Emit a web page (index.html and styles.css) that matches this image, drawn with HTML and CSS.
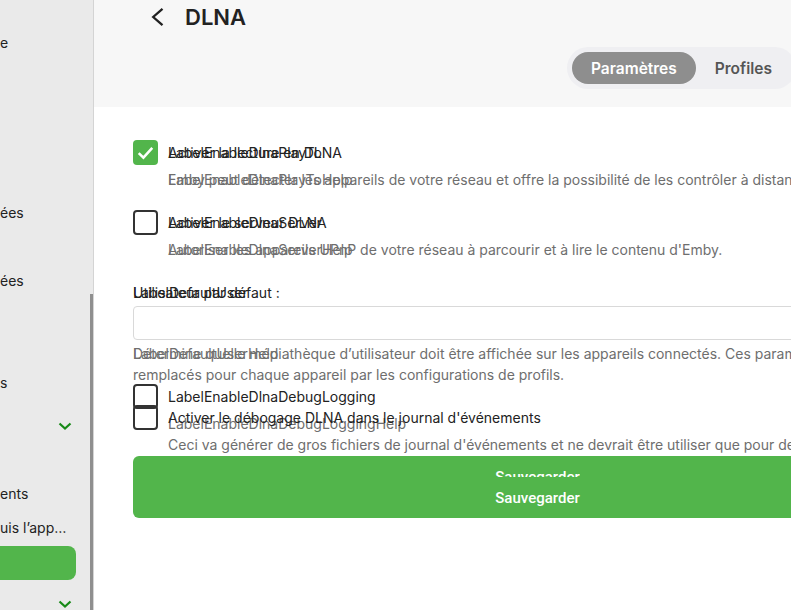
FILE: index.html
```html
<!DOCTYPE html>
<html lang="fr">
<head>
    <meta charset="UTF-8">
    <meta name="viewport" content="width=device-width, initial-scale=1.0">
    <title>DLNA</title>
    <link rel="stylesheet" href="styles.css">
</head>
<body>
<div class="app">
    <aside class="sidebar">
        <nav class="nav">
            <div class="nav-item">e</div>
            <div class="nav-item"></div>
            <div class="nav-item"></div>
            <div class="nav-item"></div>
            <div class="nav-item"></div>
            <div class="nav-item">ées</div>
            <div class="nav-item"></div>
            <div class="nav-item">ées</div>
            <div class="nav-item"></div>
            <div class="nav-item"></div>
            <div class="nav-item">s</div>
            <div class="nav-group">
                <div class="nav-group-row">
                    <svg class="chevron" viewBox="0 0 14 8"><path d="M1.5 1.5 L7 6.5 L12.5 1.5"/></svg>
                </div>
            </div>
            <div class="nav-item">ents</div>
            <div class="nav-item">uis l’app…</div>
            <div class="nav-item active"></div>
            <div class="nav-group-row last">
                <svg class="chevron" viewBox="0 0 14 8"><path d="M1.5 1.5 L7 6.5 L12.5 1.5"/></svg>
            </div>
        </nav>
        <div class="scroll-track"><div class="scroll-thumb"></div></div>
    </aside>

    <main class="main">
        <header class="page-header">
            <div class="title-row">
                <svg class="back" viewBox="0 0 24 24"><path d="M16.5 3.8 L7.2 12 L16.5 20.2"/></svg>
                <h1>DLNA</h1>
            </div>
            <div class="tabs-row">
                <div class="tabs">
                    <button class="tab active">Paramètres</button>
                    <button class="tab">Profiles</button>
                </div>
            </div>
        </header>

        <form class="settings">
            <div class="field check-field">
                <span class="checkbox checked">
                    <svg viewBox="0 0 24 24"><path d="M5.5 12.5 L10 17 L18.5 7.5"/></svg>
                </span>
                <div class="stack field-label">
                    <span>LabelEnableDlnaPlayTo</span>
                    <span>Activer la lecture en DLNA</span>
                </div>
                <div class="stack field-help">
                    <span>LabelEnableDlnaPlayToHelp</span>
                    <span>Emby peut détecter les appareils de votre réseau et offre la possibilité de les contrôler à distance.</span>
                </div>
            </div>

            <div class="field check-field">
                <span class="checkbox"></span>
                <div class="stack field-label">
                    <span>LabelEnableDlnaServer</span>
                    <span>Activer le serveur DLNA</span>
                </div>
                <div class="stack field-help">
                    <span>LabelEnableDlnaServerHelp</span>
                    <span>Autoriser les appareils UPnP de votre réseau à parcourir et à lire le contenu d'Emby.</span>
                </div>
            </div>

            <div class="select-field">
                <div class="stack field-label">
                    <span>LabelDefaultUser</span>
                    <span>Utilisateur par défaut :</span>
                </div>
                <div class="input"></div>
            </div>

            <div class="stack">
                <div class="layer">
                    <div class="field-help">LabelDefaultUserHelp</div>
                    <div class="check-field debug">
                        <span class="checkbox"></span>
                        <div class="field-label">LabelEnableDlnaDebugLogging</div>
                        <div class="field-help">LabelEnableDlnaDebugLoggingHelp</div>
                    </div>
                </div>
                <div class="layer">
                    <div class="field-help wrap">Détermine quelle médiathèque d’utilisateur doit être affichée sur les appareils connectés. Ces paramètres peuvent être remplacés pour chaque appareil par les configurations de profils.</div>
                    <div class="check-field debug">
                        <span class="checkbox"></span>
                        <div class="field-label">Activer le débogage DLNA dans le journal d'événements</div>
                        <div class="field-help">Ceci va générer de gros fichiers de journal d'événements et ne devrait être utiliser que pour des besoins de dépannage.</div>
                    </div>
                </div>
            </div>

            <button type="button" class="save">
                <span class="save-clip"><span>Sauvegarder</span></span>
                <span class="save-text">Sauvegarder</span>
            </button>
        </form>
    </main>
</div>
</body>
</html>
```

FILE: styles.css
```css
body {
    margin: 0;
    padding: 0;
    overflow: hidden;
    background-color: white;
    color: #222;
    font-family: Inter, "Noto Sans", sans-serif;
    font-size: 14px;
}
.app {
    display: flex;
    height: 610px;
}

/* sidebar */
.sidebar {
    display: flex;
    width: 93px;
    flex-shrink: 0;
    background-color: #eaeaea;
    border-right: 1px solid #d4d4d4;
}
.nav {
    width: 90px;
    padding-top: 26px;
}
.nav-item {
    height: 34px;
    line-height: 34px;
    white-space: nowrap;
    overflow: hidden;
}
.nav-item.active {
    width: 76px;
    margin-top: 1px;
    background-color: #52b54b;
    border-radius: 0 8px 8px 0;
}
.nav-group {
    height: 77px;
}
.nav-group-row {
    height: 52px;
    display: flex;
    align-items: center;
    justify-content: flex-end;
    padding-right: 18px;
}
.nav-group-row.last {
    height: 48px;
}
.chevron {
    width: 14px;
    height: 8px;
    fill: none;
    stroke: #188a18;
    stroke-width: 2.2;
}
.scroll-track {
    width: 3px;
    display: flex;
    flex-direction: column;
}
.scroll-thumb {
    margin-top: 294px;
    flex: 1;
    background-color: #8f8f8f;
}

/* main */
.main {
    width: 887px;
    flex-shrink: 0;
}
.page-header {
    background-color: #f7f7f7;
    padding-bottom: 18px;
}
.title-row {
    height: 33px;
    display: flex;
    align-items: center;
    padding-left: 52px;
}
.back {
    width: 24px;
    height: 24px;
    fill: none;
    stroke: #222;
    stroke-width: 2.3;
}
.title-row h1 {
    margin: 0 0 0 15px;
    font-size: 22px;
    font-weight: 600;
    color: #222;
}
.tabs-row {
    margin-top: 14px;
    padding-left: 473px;
}
.tabs {
    display: inline-flex;
    padding: 5px;
    background-color: #efeff2;
    border-radius: 21px;
}
.tab {
    height: 32px;
    padding: 0 19px;
    border: none;
    border-radius: 16px;
    background: none;
    color: #555;
    font-family: Inter, sans-serif;
    font-size: 15.5px;
    font-weight: 600;
}
.tab.active {
    background-color: #8e8e8e;
    color: white;
}

/* form */
.settings {
    padding: 33px 39px 0;
}
.stack {
    display: grid;
}
.stack > * {
    grid-area: 1 / 1;
}
.layer {
    align-self: start;
}
.field {
    margin-bottom: 20px;
}
.check-field {
    display: grid;
    grid-template-columns: 25px 1fr;
    column-gap: 10px;
}
.check-field .field-help {
    grid-column: 2;
}
.debug {
    margin-top: 20px;
}
.checkbox {
    width: 25px;
    height: 25px;
    box-sizing: border-box;
    border: 2px solid #333;
    border-radius: 4px;
}
.checkbox.checked {
    border: none;
    background-color: #52b54b;
}
.checkbox svg {
    width: 25px;
    height: 25px;
    fill: none;
    stroke: white;
    stroke-width: 2.4;
}
.field-label {
    line-height: 26px;
    white-space: nowrap;
    color: #222;
}
.field-help {
    margin-top: 3px;
    line-height: 21px;
    white-space: nowrap;
    color: #6e6e6e;
}
.field-help.wrap {
    white-space: normal;
}
.input {
    height: 34px;
    box-sizing: border-box;
    border: 1px solid #d9d9d9;
    border-radius: 4px;
    background-color: white;
}
.save {
    width: 100%;
    height: 62px;
    margin-top: 1px;
    padding: 12px 0 11px;
    box-sizing: border-box;
    display: flex;
    flex-direction: column;
    align-items: center;
    border: none;
    border-radius: 6px;
    background-color: #52b54b;
    color: white;
    font-family: Roboto, sans-serif;
    font-size: 15px;
    font-weight: 500;
}
.save-clip {
    height: 9px;
    overflow: hidden;
    line-height: 18px;
}
.save-text {
    margin-top: 12px;
    line-height: 18px;
}
```
